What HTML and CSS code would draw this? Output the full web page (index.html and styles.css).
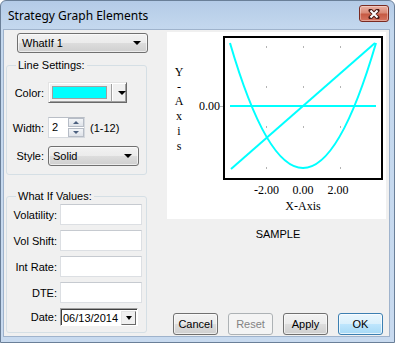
FILE: index.html
```html
<!DOCTYPE html>
<html lang="en">
<head>
  <meta charset="UTF-8">
  <title>Strategy Graph Elements</title>
  <link rel="stylesheet" href="styles.css">
</head>
<body>
  <div class="window">
    <div class="titlebar">
      <span class="title">Strategy Graph Elements</span>
      <button class="close">
        <svg width="12" height="10" viewBox="0 0 12 10">
          <path d="M2.5 1.5 L9.5 8.5 M9.5 1.5 L2.5 8.5" stroke="#4a1a14" stroke-width="4" stroke-linecap="round"/>
          <path d="M2.5 1.5 L9.5 8.5 M9.5 1.5 L2.5 8.5" stroke="#fff" stroke-width="2"/>
        </svg>
      </button>
    </div>

    <div class="client">
      <div class="left">
        <div class="select select-main"><span>WhatIf 1</span><i class="caret"></i></div>

        <fieldset class="group group-line">
          <legend>Line Settings:</legend>
          <div class="row row-color">
            <label>Color:</label>
            <div class="color-btn"><span class="swatch"></span><span class="sep"></span><i class="caret"></i></div>
          </div>
          <div class="row row-width">
            <label>Width:</label>
            <div class="spin">
              <span class="spin-val">2</span>
              <span class="spin-btns"><span class="spin-up"><i></i></span><span class="spin-down"><i></i></span></span>
            </div>
            <span class="range">(1-12)</span>
          </div>
          <div class="row row-style">
            <label>Style:</label>
            <div class="select select-style"><span>Solid</span><i class="caret"></i></div>
          </div>
        </fieldset>

        <fieldset class="group group-whatif">
          <legend>What If Values:</legend>
          <div class="frow frow-first"><label>Volatility:</label><input class="field" type="text"></div>
          <div class="frow"><label>Vol Shift:</label><input class="field" type="text"></div>
          <div class="frow"><label>Int Rate:</label><input class="field" type="text"></div>
          <div class="frow"><label>DTE:</label><input class="field" type="text"></div>
          <div class="frow frow-date">
            <label>Date:</label>
            <div class="date"><span class="date-val">06/13/2014</span><span class="date-btn"><i class="caret"></i></span></div>
          </div>
        </fieldset>
      </div>

      <div class="right">
        <div class="graph">
          <svg width="219" height="187" viewBox="0 0 219 187">
            <g stroke="#b4b4b4" stroke-width="1">
              <line x1="99.5" y1="14" x2="99.5" y2="16"/>
              <line x1="136.5" y1="14" x2="136.5" y2="16"/>
              <line x1="173.5" y1="14" x2="173.5" y2="16"/>
              <line x1="99.5" y1="54" x2="99.5" y2="56"/>
              <line x1="136.5" y1="54" x2="136.5" y2="56"/>
              <line x1="173.5" y1="54" x2="173.5" y2="56"/>
              <line x1="99.5" y1="94" x2="99.5" y2="96"/>
              <line x1="136.5" y1="94" x2="136.5" y2="96"/>
              <line x1="173.5" y1="94" x2="173.5" y2="96"/>
              <line x1="99.5" y1="135" x2="99.5" y2="137"/>
              <line x1="136.5" y1="135" x2="136.5" y2="137"/>
              <line x1="173.5" y1="135" x2="173.5" y2="137"/>
              <line x1="53" y1="74.5" x2="56" y2="74.5"/>
            </g>
            <rect x="57" y="5" width="158" height="142" fill="none" stroke="#000" stroke-width="2"/>
            <g stroke="#00ffff" stroke-width="2" fill="none">
              <line x1="63" y1="74" x2="209" y2="74"/>
              <line x1="64" y1="137" x2="208" y2="11"/>
              <path d="M63 11 Q136 261 209 11"/>
            </g>
            <g class="axis-text" text-anchor="middle">
              <text x="12" y="44">Y</text>
              <text x="12" y="59">-</text>
              <text x="12" y="73">A</text>
              <text x="12" y="88">x</text>
              <text x="12" y="103">i</text>
              <text x="12" y="118">s</text>
              <text x="53" y="78" text-anchor="end">0.00</text>
              <text x="99.5" y="162">-2.00</text>
              <text x="136" y="162">0.00</text>
              <text x="171" y="162">2.00</text>
              <text x="136" y="178">X-Axis</text>
            </g>
          </svg>
        </div>
        <div class="sample">SAMPLE</div>
        <div class="buttons">
          <button class="btn">Cancel</button>
          <button class="btn btn-disabled">Reset</button>
          <button class="btn">Apply</button>
          <button class="btn btn-default">OK</button>
        </div>
      </div>
    </div>
  </div>
</body>
</html>
```

FILE: styles.css
```css
* {
  margin: 0;
  padding: 0;
  box-sizing: border-box;
}

body {
  width: 395px;
  height: 343px;
  overflow: hidden;
  font-family: "Liberation Sans", Arial, sans-serif;
  font-size: 11px;
  color: #000;
  background: #fff;
}

.window {
  width: 395px;
  height: 343px;
  display: flex;
  flex-direction: column;
  border: 1px solid #6a7f98;
  border-radius: 6px 6px 0 0;
  background: linear-gradient(#b4cbe7, #c4d8ee 28px, #c8daef);
}

/* title bar */
.titlebar {
  height: 28px;
  display: flex;
  align-items: flex-start;
  padding: 4px 5px 0 7px;
}

.title {
  font-family: "Noto Sans", sans-serif;
  font-size: 12px;
  line-height: 16px;
  margin-top: 3px;
}

.close {
  margin-left: auto;
  width: 30px;
  height: 17px;
  border: 1px solid #7a2b22;
  border-radius: 3px;
  background: linear-gradient(#eab0a2, #da8a77 45%, #c65a44 55%, #d67460);
  box-shadow: inset 0 0 0 1px rgba(255, 255, 255, 0.35);
  display: flex;
  align-items: center;
  justify-content: center;
}

/* client area */
.client {
  flex: 1;
  margin: 0 4px 5px 2px;
  border: 1px solid #9fb3cc;
  background: #f0f0f0;
  display: flex;
}

.left {
  width: 145px;
  padding: 3px 0 0 2px;
  display: flex;
  flex-direction: column;
  align-items: flex-start;
}

.caret {
  display: block;
  width: 0;
  height: 0;
  border-style: solid;
  border-width: 4px 4px 0;
  border-color: #000 transparent transparent;
}

.select {
  display: flex;
  align-items: center;
  justify-content: space-between;
  padding: 0 6px 0 4px;
  border: 1px solid #707070;
  border-radius: 3px;
  background: linear-gradient(#f2f2f2, #ebebeb 50%, #dddddd 50%, #cfcfcf);
  box-shadow: inset 0 0 0 1px rgba(255, 255, 255, 0.6);
}

.select-main {
  margin-left: 11px;
  width: 131px;
  height: 20px;
}

.select-style {
  width: 91px;
  height: 20px;
}

/* group boxes */
.group {
  width: 141px;
  border: 1px solid #d5dfe5;
  border-radius: 3px;
  padding: 0 0 8px;
}

.group legend {
  margin-left: 9px;
  padding: 0 2px;
  line-height: 13px;
}

.group-line {
  margin-top: 6px;
}

.group-whatif {
  margin-top: 15px;
  padding-bottom: 6px;
}

.row {
  display: flex;
  align-items: center;
}

.row label {
  width: 37px;
  margin-right: 4px;
  text-align: right;
}

.row-color {
  margin-top: 10px;
  height: 21px;
}

.row-width {
  margin-top: 14px;
  height: 21px;
}

.row-style {
  margin-top: 8px;
  height: 20px;
}

.color-btn {
  width: 79px;
  height: 21px;
  display: flex;
  align-items: center;
  padding: 3px 0 3px 3px;
  background: #f0f0f0;
  border: 1px solid;
  border-color: #e3e3e3 #696969 #696969 #e3e3e3;
  box-shadow: inset 1px 1px 0 #fff, inset -1px -1px 0 #a0a0a0;
}

.swatch {
  width: 55px;
  height: 100%;
  background: #00ffff;
  border: 1px solid #a0a0a0;
}

.sep {
  width: 2px;
  height: 17px;
  margin-left: 4px;
  border-left: 1px solid #a0a0a0;
  border-right: 1px solid #fff;
}

.color-btn .caret {
  margin-left: 5px;
}

.spin {
  width: 37px;
  height: 21px;
  display: flex;
  background: #fff;
  border: 1px solid #d5d9de;
  border-top-color: #b9bec6;
}

.spin-val {
  flex: 1;
  padding-left: 3px;
  line-height: 19px;
}

.spin-btns {
  width: 16px;
  display: flex;
  flex-direction: column;
  gap: 1px;
  padding: 0 0 0 0;
}

.spin-up,
.spin-down {
  flex: 1;
  display: flex;
  align-items: center;
  justify-content: center;
  border: 1px solid #b6bcc6;
  background: linear-gradient(#f3f5f8, #dfe3e9);
}

.spin-up i,
.spin-down i {
  display: block;
  width: 0;
  height: 0;
  border-style: solid;
  border-color: transparent;
}

.spin-up i {
  border-width: 0 3px 3px;
  border-bottom-color: #4c607f;
}

.spin-down i {
  border-width: 3px 3px 0;
  border-top-color: #4c607f;
}

.range {
  margin-left: 5px;
}

/* what if fields */
.frow {
  display: flex;
  align-items: center;
  margin-top: 5px;
  height: 21px;
}

.frow-first {
  margin-top: 1px;
}

.frow label {
  width: 50px;
  margin-right: 3px;
  text-align: right;
}

.field {
  width: 82px;
  height: 21px;
  background: #fff;
  border: 1px solid #dcdfe3;
  border-top-color: #c6cad0;
  font: inherit;
  outline: none;
}

.frow-date {
  height: 18px;
}

.date {
  width: 78px;
  height: 18px;
  display: flex;
  align-items: center;
  justify-content: space-between;
  background: #fff;
  border: 1px solid;
  border-color: #a0a0a0 #fff #fff #a0a0a0;
  box-shadow: inset 1px 1px 0 #404040;
  padding: 1px 1px 0 2px;
}

.date-val {
  line-height: 14px;
}

.date-btn {
  width: 15px;
  height: 14px;
  display: flex;
  align-items: center;
  justify-content: center;
  background: #f0f0f0;
  border: 1px solid;
  border-color: #e3e3e3 #696969 #696969 #e3e3e3;
}

.date-btn .caret {
  border-width: 4px 3.5px 0;
}

/* right side */
.right {
  flex: 1;
  padding: 2px 3px 1px 18px;
  display: flex;
  flex-direction: column;
}

.graph {
  width: 219px;
  height: 187px;
  background: #fff;
}

.graph svg {
  display: block;
}

.axis-text {
  font-family: "Liberation Serif", "Times New Roman", serif;
  font-size: 12px;
  fill: #000;
}

.sample {
  margin-top: 9px;
  padding-left: 3px;
  line-height: 13px;
  text-align: center;
}

.buttons {
  margin-top: auto;
  display: flex;
  justify-content: flex-end;
  gap: 10px;
  padding-right: 3px;
}

.btn {
  width: 45px;
  height: 22px;
  font: inherit;
  color: #000;
  border: 1px solid #707070;
  border-radius: 3px;
  background: linear-gradient(#f2f2f2, #ebebeb 50%, #dddddd 50%, #cfcfcf);
  box-shadow: inset 0 0 0 1px rgba(255, 255, 255, 0.6);
}

.btn-disabled {
  color: #838383;
  border-color: #adb2b5;
  background: #f4f4f4;
  box-shadow: none;
}

.btn-default {
  border-color: #3c7fb1;
  background: linear-gradient(#eaf6fd, #d9f0fc 50%, #bee6fd 50%, #a7d9f5);
  box-shadow: inset 0 0 0 1px rgba(255, 255, 255, 0.7);
}
```
